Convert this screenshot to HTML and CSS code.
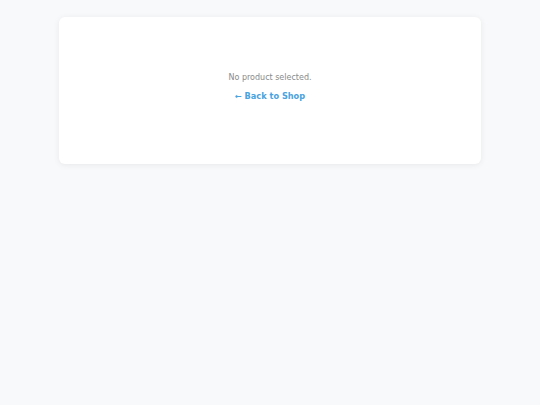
FILE: index.html
```html
<!DOCTYPE html>
<html>
<head>
<meta charset="utf-8">
<link rel="stylesheet" href="styles.css">
</head>
<body>
<main class="page">
  <section class="card">
    <p class="msg">No product selected.</p>
    <a class="back" href="#">← Back to Shop</a>
  </section>
</main>
</body>
</html>
```
FILE: styles.css
```css
html, body { margin: 0; padding: 0; }
body {
  background: #f8f9fb;
  font-family: "DejaVu Sans", sans-serif;
  width: 540px;
  height: 405px;
}
.page {
  display: flex;
  justify-content: center;
  padding-top: 17px;
}
.card {
  width: 422px;
  height: 147px;
  box-sizing: border-box;
  background: #fff;
  border-radius: 6px;
  box-shadow: 0 1px 6px rgba(0,0,0,0.07);
  display: flex;
  flex-direction: column;
  align-items: center;
  padding-top: 55px;
}
.msg {
  margin: 0;
  font-size: 8px;
  color: #8a8a8a;
  line-height: 12px;
}
.back {
  margin-top: 6px;
  font-size: 8.2px;
  font-weight: bold;
  color: #4aa3e0;
  text-decoration: none;
  line-height: 12px;
}
```
